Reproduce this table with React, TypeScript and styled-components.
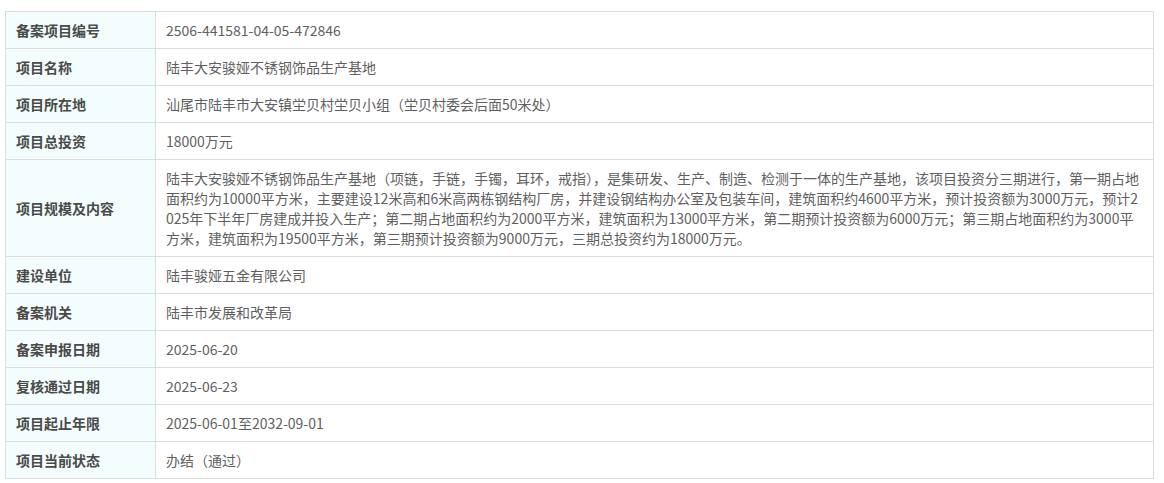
import React from "react";
import styled, { createGlobalStyle } from "styled-components";

const Global = createGlobalStyle`
  html, body { margin: 0; padding: 0; background: #fff; }
  body { font-family: "Noto Sans CJK SC", "Noto Sans", sans-serif; }
`;

const Page = styled.div`
  padding: 11px 10px 0 5px;
`;

const Table = styled.table`
  width: 1149px;
  border-collapse: collapse;
  table-layout: fixed;
  font-size: 14px;
  line-height: 20px;
`;

const Label = styled.th`
  width: 129px;
  padding: 8px 10px;
  border: 1px solid #dddddd;
  background: #f4fdfd;
  color: #4a4a4a;
  font-weight: bold;
  text-align: left;
  vertical-align: middle;
`;

const Value = styled.td`
  padding: 8px 10px;
  border: 1px solid #dddddd;
  color: #5f5f5f;
  word-break: break-all;
  vertical-align: middle;
`;

const rows: [string, string][] = [
  ["备案项目编号", "2506-441581-04-05-472846"],
  ["项目名称", "陆丰大安骏娅不锈钢饰品生产基地"],
  ["项目所在地", "汕尾市陆丰市大安镇坣贝村坣贝小组（坣贝村委会后面50米处）"],
  ["项目总投资", "18000万元"],
  [
    "项目规模及内容",
    "陆丰大安骏娅不锈钢饰品生产基地（项链，手链，手镯，耳环，戒指），是集研发、生产、制造、检测于一体的生产基地，该项目投资分三期进行，第一期占地面积约为10000平方米，主要建设12米高和6米高两栋钢结构厂房，并建设钢结构办公室及包装车间，建筑面积约4600平方米，预计投资额为3000万元，预计2025年下半年厂房建成并投入生产；第二期占地面积约为2000平方米，建筑面积为13000平方米，第二期预计投资额为6000万元；第三期占地面积约为3000平方米，建筑面积为19500平方米，第三期预计投资额为9000万元，三期总投资约为18000万元。",
  ],
  ["建设单位", "陆丰骏娅五金有限公司"],
  ["备案机关", "陆丰市发展和改革局"],
  ["备案申报日期", "2025-06-20"],
  ["复核通过日期", "2025-06-23"],
  ["项目起止年限", "2025-06-01至2032-09-01"],
  ["项目当前状态", "办结（通过）"],
];

export default function App() {
  return (
    <>
      <Global />
      <Page>
        <Table>
          <tbody>
            {rows.map(([k, v]) => (
              <tr key={k}>
                <Label>{k}</Label>
                <Value>{v}</Value>
              </tr>
            ))}
          </tbody>
        </Table>
      </Page>
    </>
  );
}
